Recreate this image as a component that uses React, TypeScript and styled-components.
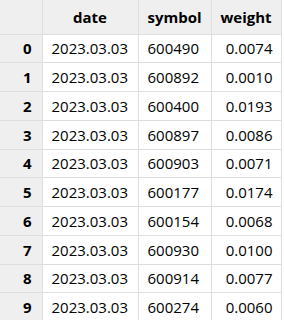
import styled, { createGlobalStyle } from "styled-components";

const GlobalStyle = createGlobalStyle`
    body {
        margin: 0;
        background: #fff;
        font-family: "Open Sans", "Noto Sans", sans-serif;
    }
`;

const Table = styled.table`
    border-collapse: collapse;
    table-layout: fixed;
    width: 281px;
    font-size: 15px;
    color: #000;
`;

const Col = styled.col<{ $w: number }>`
    width: ${p => p.$w}px;
`;

const HeadRow = styled.tr`
    height: 34px;
    background: #efefef;
`;

const Row = styled.tr`
    height: 28.75px;
`;

const HeadCell = styled.th<{ $corner?: boolean }>`
    border: 1px solid #dedede;
    border-top: none;
    border-left: ${p => (p.$corner ? "none" : "1px solid #dedede")};
    font-weight: 700;
    text-align: center;
    padding: 0;
`;

const IndexCell = styled.th`
    border: 1px solid #dedede;
    border-left: none;
    background: #efefef;
    font-weight: 700;
    text-align: right;
    padding: 0 10px 0 0;
`;

const Cell = styled.td<{ $align?: "left" | "right" }>`
    border: 1px solid #dedede;
    text-align: ${p => p.$align || "left"};
    padding: ${p => (p.$align === "right" ? "0 8px 0 0" : "0 0 0 9px")};
    white-space: nowrap;
`;

const rows = [
    { date: "2023.03.03", symbol: "600490", weight: "0.0074" },
    { date: "2023.03.03", symbol: "600892", weight: "0.0010" },
    { date: "2023.03.03", symbol: "600400", weight: "0.0193" },
    { date: "2023.03.03", symbol: "600897", weight: "0.0086" },
    { date: "2023.03.03", symbol: "600903", weight: "0.0071" },
    { date: "2023.03.03", symbol: "600177", weight: "0.0174" },
    { date: "2023.03.03", symbol: "600154", weight: "0.0068" },
    { date: "2023.03.03", symbol: "600930", weight: "0.0100" },
    { date: "2023.03.03", symbol: "600914", weight: "0.0077" },
    { date: "2023.03.03", symbol: "600274", weight: "0.0060" },
];

export default function App() {
    return (
        <>
            <GlobalStyle />
            <Table>
                <colgroup>
                    <Col $w={42} />
                    <Col $w={96} />
                    <Col $w={73} />
                    <Col $w={70} />
                </colgroup>
                <thead>
                    <HeadRow>
                        <HeadCell $corner></HeadCell>
                        <HeadCell>date</HeadCell>
                        <HeadCell>symbol</HeadCell>
                        <HeadCell>weight</HeadCell>
                    </HeadRow>
                </thead>
                <tbody>
                    {rows.map((r, i) => (
                        <Row key={i}>
                            <IndexCell>{i}</IndexCell>
                            <Cell>{r.date}</Cell>
                            <Cell>{r.symbol}</Cell>
                            <Cell $align="right">{r.weight}</Cell>
                        </Row>
                    ))}
                </tbody>
            </Table>
        </>
    );
}
